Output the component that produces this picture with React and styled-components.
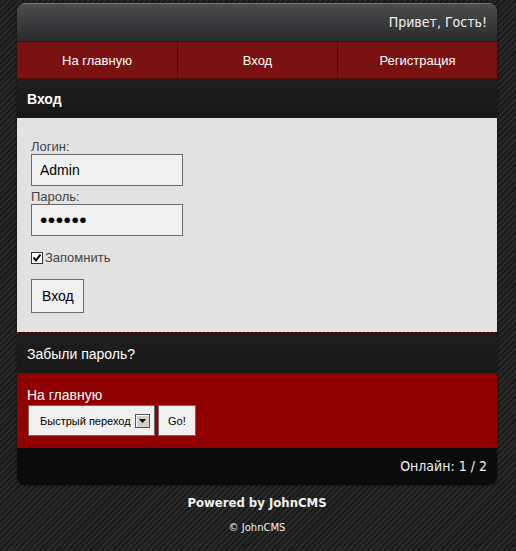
import React from "react";
import styled, { createGlobalStyle } from "styled-components";

const GlobalStyle = createGlobalStyle`
  html, body {
    margin: 0;
    padding: 0;
  }
  body {
    min-height: 551px;
    background-color: #1b1b1b;
    background-image: repeating-linear-gradient(
      135deg,
      #1a1a1a 0px,
      #1a1a1a 2px,
      #2a2a2a 2px,
      #2a2a2a 4px
    );
    font-family: "Liberation Sans", Arial, sans-serif;
  }
`;

const Page = styled.div`
  width: 480px;
  margin: 3px 0 0 17px;
`;

const Shell = styled.div`
  border-radius: 8px;
  overflow: hidden;
  box-shadow: 0 0 3px rgba(0, 0, 0, 0.6);
`;

const TopBar = styled.div`
  height: 38px;
  box-sizing: border-box;
  border-top: 1px solid #777;
  background: linear-gradient(to bottom, #4c4d4f 0%, #3a3b3d 50%, #2b2c2f 100%);
  display: flex;
  align-items: center;
  justify-content: flex-end;
  padding: 0 10px 2px 0;
  color: #f2f2f2;
  font-family: "DejaVu Sans Condensed", "DejaVu Sans", Verdana, sans-serif;
  font-size: 14px;
`;

const Nav = styled.nav`
  display: grid;
  grid-template-columns: 1fr 1fr 1fr;
  height: 38px;
  box-sizing: border-box;
  border-top: 1px solid #4e0606;
  border-bottom: 1px solid #5a0909;
  background: #7b1212;
`;

const NavLink = styled.a`
  display: flex;
  align-items: center;
  justify-content: center;
  color: #fff;
  font-size: 13px;
  text-decoration: none;
  border-left: ${(p) => (p.$first ? "none" : "1px solid #5a0707")};
`;

const Bar = styled.div`
  height: 39px;
  box-sizing: border-box;
  display: flex;
  align-items: center;
  padding: 0 10px;
  background: linear-gradient(to bottom, #1f1f1f, #181818);
  color: #fff;
  font-size: 14px;
  font-weight: ${(p) => (p.$bold ? "bold" : "normal")};
`;

const Form = styled.form`
  background: #e2e2e2;
  padding: 21px 14px 19px;
  display: flex;
  flex-direction: column;
  align-items: flex-start;
`;

const Label = styled.label`
  display: block;
  color: #444;
  font-size: 13px;
  line-height: 15px;
`;

const Input = styled.input`
  width: 152px;
  height: 32px;
  box-sizing: border-box;
  border: 1px solid #6a6a6a;
  background: #f0f0f0;
  padding: 0 8px;
  margin: 0 0 3px;
  font-family: "Liberation Sans", Arial, sans-serif;
  font-size: ${(p) => (p.type === "password" ? "21px" : "14px")};
  letter-spacing: ${(p) => (p.type === "password" ? "0.5px" : "0")};
  color: #000;
  outline: none;
`;

const CheckRow = styled.label`
  display: flex;
  align-items: center;
  margin-top: 11px;
  color: #444;
  font-size: 13px;
  line-height: 16px;
`;

const Check = styled.span`
  width: 12px;
  height: 12px;
  box-sizing: border-box;
  border: 1px solid #333;
  background: #fff;
  display: flex;
  align-items: center;
  justify-content: center;
  margin-right: 2px;
`;

const Button = styled.button`
  height: ${(p) => p.$height || 34}px;
  box-sizing: border-box;
  border: 1px solid #6a6a6a;
  background: #f0f0f0;
  color: #000;
  font-family: "Liberation Sans", Arial, sans-serif;
  font-size: ${(p) => p.$size || 14}px;
  padding: 0 ${(p) => p.$pad || 10}px;
  cursor: pointer;
`;

const SubmitButton = styled(Button)`
  margin-top: 13px;
  width: 53px;
`;

const Divider = styled.div`
  height: 2px;
  background: repeating-linear-gradient(
    90deg,
    #8a0000 0px,
    #8a0000 2px,
    #111 2px,
    #111 4px
  );
`;

const RedBlock = styled.div`
  background: #8f0000;
  padding: 14px 10px 12px;
  color: #fff;
  font-size: 14px;
`;

const RedTitle = styled.div`
  line-height: 17px;
`;

const Jump = styled.div`
  display: flex;
  gap: 3px;
  margin-top: 1px;
  padding-left: 1px;
`;

const Select = styled.div`
  height: 31px;
  width: 127px;
  box-sizing: border-box;
  border: 1px solid #6a6a6a;
  background: #f0f0f0;
  display: flex;
  align-items: center;
  padding-left: 11px;
  gap: 4px;
  color: #000;
  font-size: 11px;
`;

const Arrow = styled.span`
  width: 15px;
  height: 14px;
  box-sizing: border-box;
  border: 1px solid #555;
  background: #d4d0c8;
  box-shadow: inset 1px 1px 0 #fff;
  display: flex;
  align-items: center;
  justify-content: center;
`;

const Footer = styled.div`
  height: 37px;
  box-sizing: border-box;
  background: #0b0b0b;
  display: flex;
  align-items: center;
  justify-content: flex-end;
  padding: 0 10px 2px;
  color: #f2f2f2;
  font-family: "DejaVu Sans Condensed", "DejaVu Sans", Verdana, sans-serif;
  font-size: 14px;
`;

const Credits = styled.div`
  text-align: center;
  color: #f0f0f0;
  font-family: "DejaVu Sans", Verdana, sans-serif;
  padding-top: 10px;
`;

const Powered = styled.div`
  font-family: "DejaVu Sans Condensed", "DejaVu Sans", Verdana, sans-serif;
  font-size: 13px;
  font-weight: bold;
  line-height: 16px;
`;

const Copy = styled.div`
  font-size: 10px;
  margin-top: 11px;
`;

const App = () => {
  return (
    <>
      <GlobalStyle />
      <Page>
        <Shell>
          <TopBar>Привет, Гость!</TopBar>
          <Nav>
            <NavLink $first href="#">На главную</NavLink>
            <NavLink href="#">Вход</NavLink>
            <NavLink href="#">Регистрация</NavLink>
          </Nav>
          <Bar $bold>Вход</Bar>
          <Form onSubmit={(e) => e.preventDefault()}>
            <Label>Логин:</Label>
            <Input type="text" defaultValue="Admin" />
            <Label>Пароль:</Label>
            <Input type="password" defaultValue="123456" />
            <CheckRow>
              <Check>
                <svg width="10" height="10" viewBox="0 0 10 10">
                  <path d="M1.5 4.5 L4 7.5 L8.5 1.5" stroke="#000" strokeWidth="2" fill="none" />
                </svg>
              </Check>
              Запомнить
            </CheckRow>
            <SubmitButton type="submit">Вход</SubmitButton>
          </Form>
          <Divider />
          <Bar>Забыли пароль?</Bar>
          <RedBlock>
            <RedTitle>На главную</RedTitle>
            <Jump>
              <Select>
                Быстрый переход
                <Arrow>
                  <svg width="7" height="4" viewBox="0 0 7 4">
                    <path d="M0 0 H7 L3.5 4 Z" fill="#000" />
                  </svg>
                </Arrow>
              </Select>
              <Button $height={31} $size={11} $pad={9}>Go!</Button>
            </Jump>
          </RedBlock>
          <Footer>Онлайн: 1 / 2</Footer>
        </Shell>
        <Credits>
          <Powered>Powered by JohnCMS</Powered>
          <Copy>© JohnCMS</Copy>
        </Credits>
      </Page>
    </>
  );
};

export default App;
